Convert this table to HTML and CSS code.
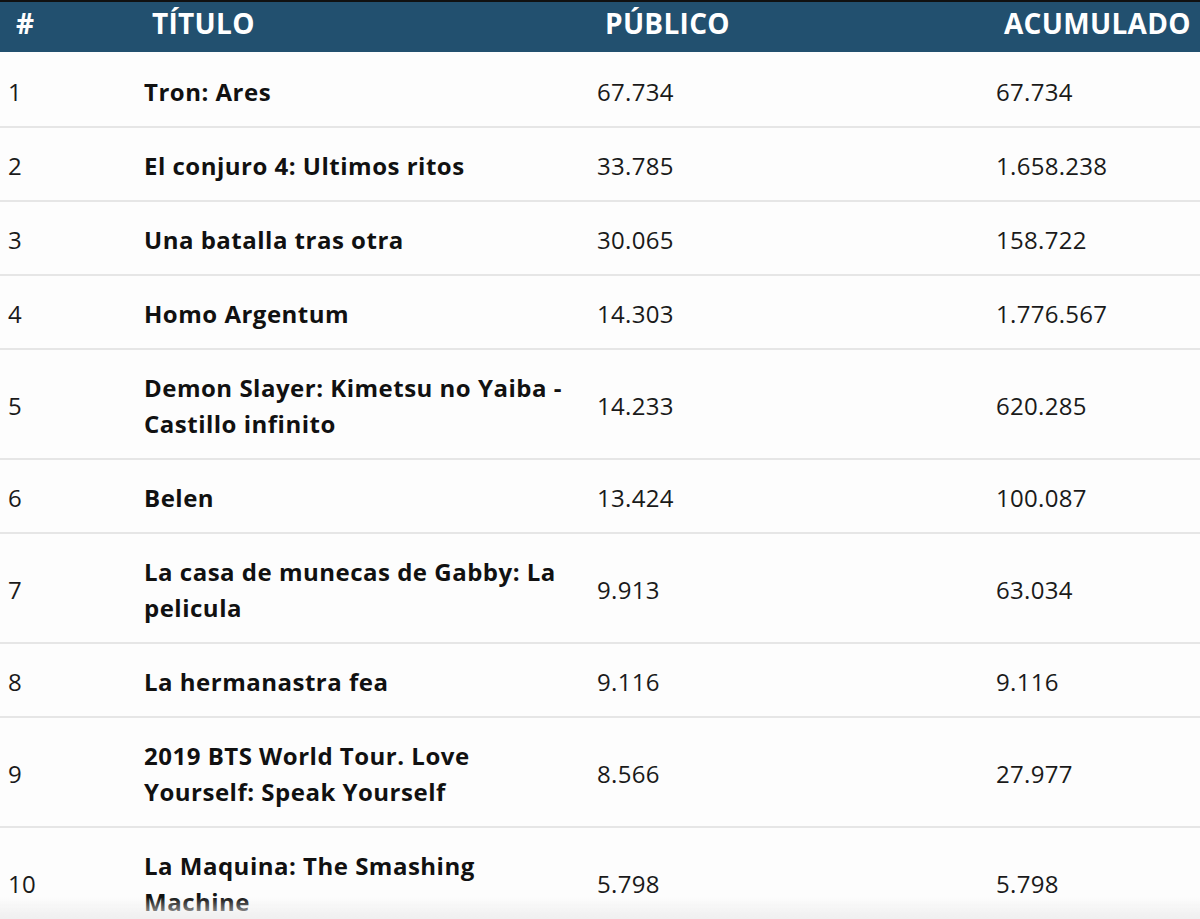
FILE: index.html
```html
<!DOCTYPE html>
<html lang="es">
<head>
<meta charset="utf-8">
<title>Ranking</title>
<link rel="stylesheet" href="styles.css">
</head>
<body>
<div class="topline"></div>
<table class="ranking">
  <colgroup>
    <col class="c-pos"><col class="c-title"><col class="c-pub"><col class="c-acc">
  </colgroup>
  <thead>
    <tr><th>#</th><th>TÍTULO</th><th>PÚBLICO</th><th>ACUMULADO</th></tr>
  </thead>
  <tbody>
    <tr><td>1</td><td class="t">Tron: Ares</td><td>67.734</td><td>67.734</td></tr>
    <tr><td>2</td><td class="t">El conjuro 4: Ultimos ritos</td><td>33.785</td><td>1.658.238</td></tr>
    <tr><td>3</td><td class="t">Una batalla tras otra</td><td>30.065</td><td>158.722</td></tr>
    <tr><td>4</td><td class="t">Homo Argentum</td><td>14.303</td><td>1.776.567</td></tr>
    <tr><td>5</td><td class="t">Demon Slayer: Kimetsu no Yaiba - Castillo infinito</td><td>14.233</td><td>620.285</td></tr>
    <tr><td>6</td><td class="t">Belen</td><td>13.424</td><td>100.087</td></tr>
    <tr><td>7</td><td class="t">La casa de munecas de Gabby: La pelicula</td><td>9.913</td><td>63.034</td></tr>
    <tr><td>8</td><td class="t">La hermanastra fea</td><td>9.116</td><td>9.116</td></tr>
    <tr><td>9</td><td class="t">2019 BTS World Tour. Love Yourself: Speak Yourself</td><td>8.566</td><td>27.977</td></tr>
    <tr><td>10</td><td class="t">La Maquina: The Smashing Machine</td><td>5.798</td><td>5.798</td></tr>
  </tbody>
</table>
<div class="fade"></div>
</body>
</html>
```
FILE: styles.css
```css
html, body {
  margin: 0;
  padding: 0;
  background: #ffffff;
  font-family: "Open Sans", "Liberation Sans", sans-serif;
  color: #111111;
  overflow: hidden;
}
.topline {
  height: 2px;
  background: #111111;
}
.ranking {
  width: 1200px;
  border-collapse: collapse;
  table-layout: fixed;
}
.c-pos { width: 136px; }
.c-title { width: 453px; }
.c-pub { width: 399px; }
.c-acc { width: 212px; }
.ranking th {
  background: #22506f;
  color: #ffffff;
  font-size: 28px;
  font-weight: 700;
  text-align: left;
  height: 42px;
  padding: 0 0 8px 16px;
  line-height: 42px;
  letter-spacing: 0.3px;
  white-space: nowrap;
}
.ranking td {
  font-size: 24px;
  line-height: 36px;
  padding: 20px 8px 16px 8px;
  border-bottom: 2px solid #e6e6e6;
  font-weight: 400;
  letter-spacing: 0.3px;
  color: #1a1a1a;
  vertical-align: middle;
  background: #fdfdfd;
}
.ranking tbody tr:first-child td {
  padding-top: 22px;
}
.ranking td.t {
  font-weight: 700;
  letter-spacing: 0.5px;
  color: #111111;
}
.fade {
  position: fixed;
  left: 0;
  right: 0;
  bottom: 0;
  height: 22px;
  background: linear-gradient(to bottom, rgba(235, 235, 235, 0), rgba(235, 235, 235, 0.8));
  pointer-events: none;
}
```
